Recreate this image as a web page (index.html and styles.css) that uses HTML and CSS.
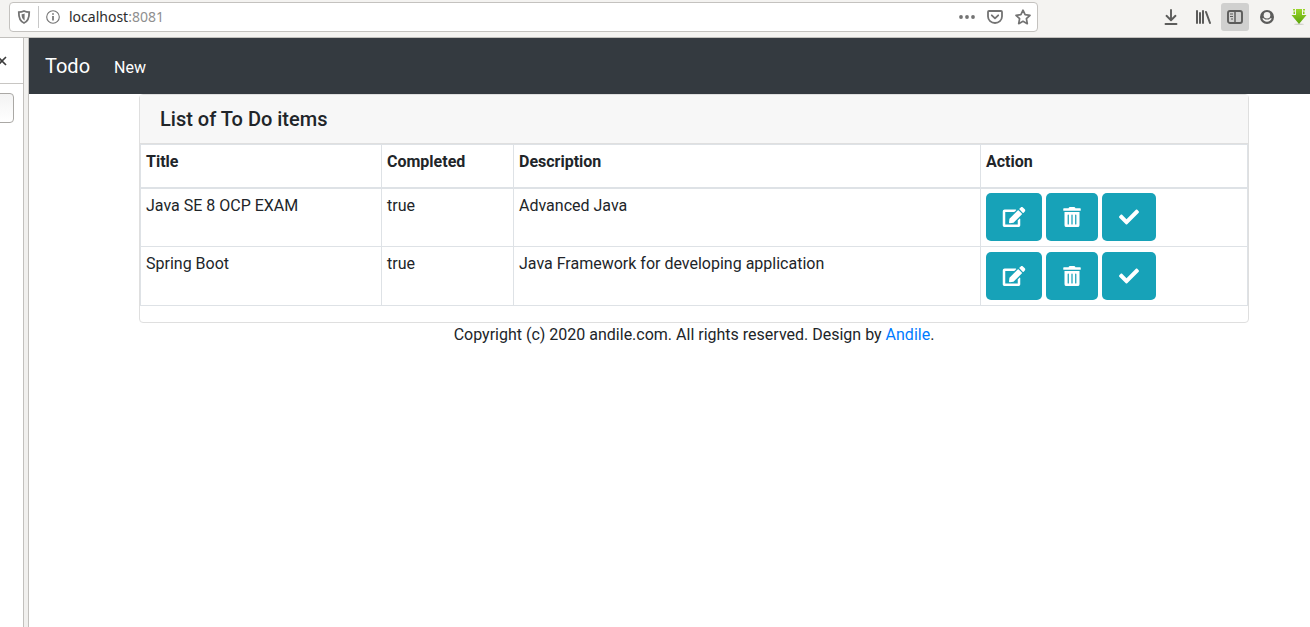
FILE: index.html
```html
<!DOCTYPE html>
<html lang="en">
<head>
<meta charset="utf-8">
<title>Todo</title>
<link rel="stylesheet" href="styles.css">
</head>
<body>
<svg class="defs" aria-hidden="true">
  <symbol id="edit" viewBox="0 0 576 512"><path d="M402.6 83.2l90.2 90.2c3.8 3.8 3.8 10 0 13.8L274.400 405.600l-92.800 10.300c-12.400 1.400-22.900-9.100-21.500-21.500l10.300-92.800L388.800 83.200c3.800-3.800 10-3.800 13.800 0zm162-22.900l-48.800-48.800c-15.200-15.200-39.900-15.200-55.200 0l-35.400 35.400c-3.800 3.800-3.800 10 0 13.800l90.200 90.200c3.800 3.800 10 3.800 13.800 0l35.400-35.400c15.200-15.300 15.200-40 0-55.200zM384 346.200V448H64V128h229.800c3.200 0 6.200-1.300 8.500-3.500l40-40c7.600-7.600 2.200-20.500-8.500-20.500H48C21.500 64 0 85.500 0 112v352c0 26.500 21.500 48 48 48h352c26.500 0 48-21.500 48-48V306.200c0-10.700-12.900-16-20.500-8.500l-40 40c-2.200 2.300-3.500 5.300-3.500 8.500z"/></symbol>
  <symbol id="trash" viewBox="0 0 448 512"><path d="M32 464a48 48 0 0 0 48 48h288a48 48 0 0 0 48-48V128H32zm272-256a16 16 0 0 1 32 0v224a16 16 0 0 1-32 0zm-96 0a16 16 0 0 1 32 0v224a16 16 0 0 1-32 0zm-96 0a16 16 0 0 1 32 0v224a16 16 0 0 1-32 0zM432 32H312l-9.400-18.700A24 24 0 0 0 281.100 0H166.800a23.720 23.720 0 0 0-21.400 13.300L136 32H16A16 16 0 0 0 0 48v32a16 16 0 0 0 16 16h416a16 16 0 0 0 16-16V48a16 16 0 0 0-16-16z"/></symbol>
  <symbol id="check" viewBox="0 0 512 512"><path d="M173.898 439.404l-166.400-166.400c-9.997-9.997-9.997-26.206 0-36.204l36.203-36.204c9.997-9.998 26.207-9.998 36.204 0L192 312.690 432.095 72.596c9.997-9.997 26.207-9.997 36.204 0l36.203 36.204c9.997 9.997 9.997 26.206 0 36.204l-294.400 294.401c-9.998 9.997-26.207 9.997-36.204-.001z"/></symbol>
</svg>

<header class="toolbar">
  <div class="urlbar">
    <button class="chrome-btn shield" aria-label="Tracking protection">
      <svg width="14" height="14" viewBox="0 0 14 14"><path d="M7 1C5.200 1.800 3.500 2.100 1.800 2.100C1.700 7.500 2.500 11.300 7 13C11.500 11.300 12.300 7.500 12.200 2.100C10.500 2.100 8.800 1.800 7 1Z" fill="none" stroke="#737373" stroke-width="1.800"/><path d="M7.600 3.600V10.400C5.200 9 4.600 7 4.600 4.200C5.600 4.100 6.700 3.900 7.600 3.600Z" fill="#737373"/></svg>
    </button>
    <button class="chrome-btn" aria-label="Site information">
      <svg width="14" height="14" viewBox="0 0 14 14" fill="none" stroke="#737373"><circle cx="7" cy="7" r="6.300" stroke-width="1.100"/><path d="M7 6V10.500M7 3.200V4.800" stroke-width="1.700"/></svg>
    </button>
    <div class="address">localhost<span class="port">:8081</span></div>
    <div class="url-actions">
      <button class="chrome-btn" aria-label="Page actions">
        <svg width="16" height="16" viewBox="0 0 16 16" fill="#737373"><circle cx="2" cy="8" r="1.900"/><circle cx="8" cy="8" r="1.900"/><circle cx="14" cy="8" r="1.900"/></svg>
      </button>
      <button class="chrome-btn" aria-label="Save to Pocket">
        <svg width="16" height="16" viewBox="0 0 16 16" fill="none" stroke="#737373" stroke-width="1.800" stroke-linecap="round" stroke-linejoin="round"><path d="M2 2H14Q15 2 15 3V7.500A7 6.500 0 0 1 1 7.500V3Q1 2 2 2Z"/><path d="M4.800 6.300L8 9.300L11.200 6.300"/></svg>
      </button>
      <button class="chrome-btn" aria-label="Bookmark this page">
        <svg width="16" height="16" viewBox="0 0 16 16" fill="none" stroke="#737373" stroke-width="1.700" stroke-linejoin="round"><path d="M8 1.200L10.100 5.700L15 6.300L11.400 9.700L12.300 14.700L8 12.300L3.700 14.700L4.600 9.700L1 6.300L5.900 5.700Z"/></svg>
      </button>
    </div>
  </div>
  <div class="tools">
    <button class="tool" aria-label="Downloads">
      <svg width="16" height="16" viewBox="0 0 16 16" fill="none" stroke="#5c5c5b" stroke-width="1.900" stroke-linecap="round" stroke-linejoin="round"><path d="M8 1V11M3.500 6.800L8 11.200L12.500 6.800M2.500 15H13.500"/></svg>
    </button>
    <button class="tool" aria-label="Library">
      <svg width="16" height="16" viewBox="0 0 16 16" fill="none" stroke="#5c5c5b" stroke-width="2" stroke-linecap="round"><path d="M2 2V14M5 4V14M8 2V14M11 3L15 14"/></svg>
    </button>
    <button class="tool active" aria-label="Sidebar">
      <svg width="16" height="16" viewBox="0 0 16 16" fill="none" stroke="#5c5c5b"><rect x="1" y="2" width="14" height="12" rx="2" stroke-width="1.900"/><path d="M8 2V14" stroke-width="1.500"/><path d="M3 5H6M3 7.500H6M4 10H6" stroke-width="1"/></svg>
    </button>
    <button class="tool" aria-label="Account">
      <svg width="16" height="16" viewBox="0 0 16 16"><circle cx="8" cy="8" r="7" fill="#5c5c5b"/><circle cx="8" cy="6.200" r="3.300" fill="#f4f3f1"/><path d="M3.300 9.300C4.500 9.100 5.300 9.800 6.200 10.400H9.800C10.700 9.800 11.500 9.100 12.700 9.300C11.500 13.800 4.500 13.800 3.300 9.300Z" fill="#f4f3f1"/></svg>
    </button>
    <button class="tool" aria-label="Download helper">
      <svg width="16" height="16" viewBox="0 0 16 16"><defs><linearGradient id="green" x2="0" y2="1"><stop stop-color="#9bd62a"/><stop offset="1" stop-color="#5aa30a"/></linearGradient></defs><ellipse cx="8" cy="15.200" rx="5" ry=".8" fill="#d0d0ca"/><path d="M5 0H11V6H15.500L8 15L.5 6H5ZM2 0H4V1.500H2ZM2.500 2.500H4V5H2.500ZM12 0H14V1.500H12ZM12 2.500H13.500V5H12Z" fill="url(#green)"/></svg>
    </button>
  </div>
</header>

<div class="browser-body">
  <aside class="sidebar">
    <div class="sidebar-head">
      <button class="close" aria-label="Close sidebar"><svg width="10" height="10" viewBox="0 0 10 10" fill="none" stroke="#3c3c3c" stroke-width="1.600"><path d="M1 1L9 9M9 1L1 9"/></svg></button>
    </div>
    <input class="sidebar-search" type="text" aria-label="Search sidebar">
  </aside>
  <div class="page">
    <nav class="navbar">
      <a class="brand" href="#">Todo</a>
      <a class="nav-link" href="#">New</a>
    </nav>
    <main class="container">
      <section class="card">
        <h1 class="card-title">List of To Do items</h1>
        <table class="todos">
          <colgroup><col class="col-title"><col class="col-completed"><col class="col-description"><col class="col-action"></colgroup>
          <thead>
            <tr><th>Title</th><th>Completed</th><th>Description</th><th>Action</th></tr>
          </thead>
          <tbody>
            <tr>
              <td>Java SE 8 OCP EXAM</td><td>true</td><td>Advanced Java</td>
              <td class="action-cell"><div class="actions">
                <button class="btn" aria-label="Edit"><svg width="24" height="20"><use href="#edit"/></svg></button>
                <button class="btn" aria-label="Delete"><svg width="20" height="20"><use href="#trash"/></svg></button>
                <button class="btn" aria-label="Complete"><svg width="22" height="20"><use href="#check"/></svg></button>
              </div></td>
            </tr>
            <tr>
              <td>Spring Boot</td><td>true</td><td>Java Framework for developing application</td>
              <td class="action-cell"><div class="actions">
                <button class="btn" aria-label="Edit"><svg width="24" height="20"><use href="#edit"/></svg></button>
                <button class="btn" aria-label="Delete"><svg width="20" height="20"><use href="#trash"/></svg></button>
                <button class="btn" aria-label="Complete"><svg width="22" height="20"><use href="#check"/></svg></button>
              </div></td>
            </tr>
          </tbody>
        </table>
      </section>
      <footer class="footer">Copyright (c) 2020 andile.com. All rights reserved. Design by <a href="#">Andile</a>.</footer>
    </main>
  </div>
</div>
</body>
</html>
```
FILE: styles.css
```css
* { box-sizing: border-box; }

body {
  margin: 0;
  min-height: 100vh;
  display: flex;
  flex-direction: column;
  background: #fff;
  color: #212529;
  font: 16px/24px Roboto, sans-serif;
}

svg { display: block; flex: none; }
button { border: 0; background: none; padding: 0; color: inherit; font: inherit; }
a { color: #007bff; text-decoration: none; }
.defs { position: absolute; width: 0; height: 0; }

/* Browser toolbar */
.toolbar {
  display: flex;
  justify-content: space-between;
  padding: 2px 0 5px 9px;
  background: #f4f3f1;
  border-bottom: 1px solid #c2c0bd;
  overflow: hidden;
}
.urlbar {
  flex: 0 1 1029px;
  display: flex;
  align-items: center;
  height: 30px;
  padding: 0 6px 0 7px;
  background: #fff;
  border: 1px solid #c4c2bf;
  border-radius: 4px;
}
.shield {
  padding-right: 7px;
  border-right: 1px solid #c8c8c8;
  margin-right: 7px;
  height: 22px;
}
.chrome-btn { display: flex; align-items: center; }
.address {
  flex: 1;
  padding-left: 9px;
  color: #2b2b2b;
  font: 14px/20px "Noto Sans", sans-serif;
}
.port { color: #8f8f8f; }
.url-actions { display: flex; gap: 12px; }
.tools { display: flex; gap: 4px; margin-right: -3px; }
.tool {
  display: grid;
  place-items: center;
  width: 28px;
  height: 28px;
  margin-top: 1px;
  border-radius: 3px;
}
.tool.active { background: #d0d0cf; }

/* Sidebar */
.browser-body { flex: 1; display: flex; }
.sidebar {
  flex: none;
  width: 29px;
  border-right: 1px solid #c2c0bd;
  background: linear-gradient(to right, #fff 23px, #c2c0bd 23px, #c2c0bd 24px, #f1f0ee 24px);
  overflow: hidden;
}
.sidebar-head {
  width: 23px;
  height: 46px;
  display: flex;
  align-items: center;
  border-bottom: 1px solid #c8c6c3;
}
.close { margin-left: -3px; }
.sidebar-search {
  display: block;
  width: 44px;
  height: 30px;
  margin: 9px 0 0 -30px;
  border: 1px solid #aaa8a5;
  border-radius: 4px;
  background: linear-gradient(#f3f3f3, #fff);
}

/* Page */
.page { flex: 1; min-width: 0; }
.navbar {
  display: flex;
  align-items: baseline;
  gap: 24px;
  padding: 13px 16px;
  background: #343a40;
}
.navbar a { color: #fff; }
.brand { font-size: 20px; line-height: 30px; }
.container { padding: 0 61px 0 110px; }
.card {
  padding-bottom: 16px;
  border: 1px solid #dfdfdf;
  border-radius: 4px;
}
.card-title {
  margin: 0;
  padding: 12px 20px;
  background: #f7f7f7;
  border-bottom: 1px solid #dfdfdf;
  font-size: 20px;
  line-height: 24px;
  font-weight: 500;
}
.todos {
  width: 100%;
  table-layout: fixed;
  border-collapse: collapse;
}
.col-title { width: 241px; }
.col-completed { width: 132px; }
.col-action { width: 267px; }
.todos th, .todos td {
  padding: 5px;
  border: 1px solid #dee2e6;
  text-align: left;
  vertical-align: top;
}
.todos th { padding-bottom: 13px; border-bottom-width: 2px; font-weight: 700; }
.todos .action-cell { padding: 4px 5px 5px; }
.todos tr + tr .action-cell { padding: 5px; }
.actions { display: flex; gap: 4px; }
.btn {
  padding: 14px 16px;
  border-radius: 5px;
  background: #17a2b8;
}
.btn svg { fill: #fff; }
.footer { text-align: center; }
```
